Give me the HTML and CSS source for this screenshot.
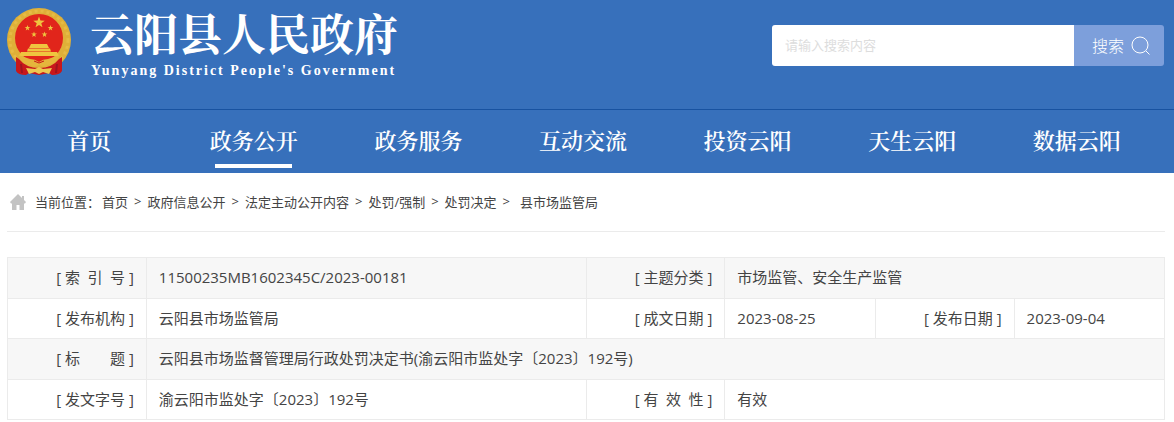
FILE: index.html
```html
<!DOCTYPE html>
<html lang="zh-CN">
<head>
<meta charset="utf-8">
<meta name="viewport" content="width=device-width, initial-scale=1">
<title>云阳县人民政府</title>
<link rel="stylesheet" href="styles.css">
</head>
<body>
<header class="site-header">
  <div class="banner">
    <a class="brand" href="#">
      <svg class="emblem" viewBox="0 0 64 70" aria-hidden="true">
        <defs>
          <path id="star" d="M0-5 1.2-1.6 4.8-1.5 1.9.6 2.9 4 0 2-2.9 4-1.9.6-4.8-1.5-1.2-1.6Z"/>
        </defs>
        <circle cx="32" cy="32" r="32" fill="#dfb038"/>
        <circle cx="32" cy="32" r="29" fill="none" stroke="#e6bb45" stroke-width="3" stroke-dasharray="3 3"/>
        <circle cx="32" cy="30" r="24" fill="#e1251b"/>
        <g fill="#efc53f">
          <use href="#star" transform="translate(32 14.500) scale(1.200)"/>
          <use href="#star" transform="translate(20.500 20) scale(.6)"/>
          <use href="#star" transform="translate(43.500 20) scale(.6)"/>
          <use href="#star" transform="translate(27 26.500) scale(.6)"/>
          <use href="#star" transform="translate(37.500 26.500) scale(.6)"/>
          <path d="M24 36h16l2 4H22Z"/>
          <path d="M21 40.500h22l1 3H20Z"/>
          <path d="M14 44h36l2 4H12Z"/>
        </g>
        <path d="M9 49 12 51Q19 60 32 60T52 51L55 49V63Q53 67 45 67L42 65 32 67 22 65 19 67Q11 67 9 63Z" fill="#c8171b"/>
        <path d="M11 47Q17 49 23 51Q28 51 32 54Q36 51 41 51Q47 49 53 47Q51 52 47 55L41 57 37 59 32 57 27 59 23 57 17 55Q13 52 11 47Z" fill="#e5b63c"/>
        <path d="M27 53 32 55 37 53" fill="none" stroke="#c8171b" stroke-width="1"/>
        <path d="M19 60 28 61 32 59 36 61 45 60 42 66 36 64 32 66 28 64 22 66Z" fill="#edc850"/>
        <path d="M14 56 15 65M50 56 49 65" stroke="#9f141f" stroke-width="2"/>
      </svg>
      <span class="brand-text">
        <span class="brand-name">云阳县人民政府</span>
        <span class="brand-sub" lang="en">Yunyang District People's Government</span>
      </span>
    </a>
    <form class="search" role="search">
      <input class="search-input" type="search" aria-label="搜索" placeholder="请输入搜索内容">
      <button class="search-button" type="submit">搜索
        <svg class="search-icon" viewBox="0 0 20 20" aria-hidden="true"><circle cx="9" cy="9" r="8"/><path d="M15 15 18.500 18.500"/></svg>
      </button>
    </form>
  </div>
  <nav class="main-nav">
    <a class="nav-link" href="#">首页</a>
    <a class="nav-link nav-active" href="#">政务公开</a>
    <a class="nav-link" href="#">政务服务</a>
    <a class="nav-link" href="#">互动交流</a>
    <a class="nav-link" href="#">投资云阳</a>
    <a class="nav-link" href="#">天生云阳</a>
    <a class="nav-link" href="#">数据云阳</a>
  </nav>
</header>
<main class="content">
  <nav class="crumbs" aria-label="当前位置">
    <svg class="home-icon" viewBox="0 0 16 16" aria-hidden="true"><path d="M8 0 12 4V2h2v4l2 2-1 1.500h-1V16H9.500v-5h-3v5H2V9.500H1L0 8Z"/></svg>
    <span class="crumbs-label">当前位置：</span><a href="#">首页</a><span class="sep">&gt;</span><a href="#">政府信息公开</a><span class="sep">&gt;</span><a href="#">法定主动公开内容</a><span class="sep">&gt;</span><a href="#">处罚/强制</a><span class="sep">&gt;</span><a href="#">处罚决定</a><span class="sep">&gt;</span><a class="current" href="#">县市场监管局</a>
  </nav>
  <table class="info">
    <colgroup><col class="c-label"><col class="c-wide"><col class="c-label"><col class="c-value"><col class="c-label"><col class="c-value"></colgroup>
    <tbody>
      <tr><th scope="row">[ <span class="label">索引号</span> ]</th><td>11500235MB1602345C/2023-00181</td><th scope="row">[ <span class="label">主题分类</span> ]</th><td colspan="3">市场监管、安全生产监管</td></tr>
      <tr><th scope="row">[ <span class="label">发布机构</span> ]</th><td>云阳县市场监管局</td><th scope="row">[ <span class="label">成文日期</span> ]</th><td>2023-08-25</td><th scope="row">[ <span class="label">发布日期</span> ]</th><td>2023-09-04</td></tr>
      <tr><th scope="row">[ <span class="label">标题</span> ]</th><td colspan="5">云阳县市场监督管理局行政处罚决定书(渝云阳市监处字〔2023〕192号)</td></tr>
      <tr><th scope="row">[ <span class="label">发文字号</span> ]</th><td>渝云阳市监处字〔2023〕192号</td><th scope="row">[ <span class="label">有效性</span> ]</th><td colspan="3">有效</td></tr>
    </tbody>
  </table>
</main>
</body>
</html>
```
FILE: styles.css
```css
* { box-sizing: border-box; }

body {
  margin: 0;
  background: #fff;
  color: #444;
  font-family: "Open Sans", "Noto Sans CJK SC", sans-serif;
  font-size: 15px;
}

a { color: inherit; text-decoration: none; }

.site-header { background: #3770bb; color: #fff; }

.banner {
  display: flex;
  justify-content: space-between;
  align-items: flex-start;
  min-height: 109px;
  padding: 8px 10px 0 7px;
}

.brand { display: flex; gap: 19px; }
.emblem { width: 64px; height: 70px; }
.brand-text { display: flex; flex-direction: column; gap: 5px; }
.brand-name {
  font: 700 44px/48px "Noto Serif CJK SC", "Noto Sans CJK SC", serif;
}
.brand-sub {
  padding-left: 1px;
  font: 700 14px/20px "Liberation Serif", serif;
  letter-spacing: 2px;
}

.search {
  display: flex;
  width: 392px;
  height: 41px;
  margin-top: 17px;
  border-radius: 3px;
  overflow: hidden;
}
.search-input {
  flex: 1;
  min-width: 0;
  padding: 0 13px 2px;
  border: 0;
  background: #fff;
  font: 13px "Open Sans", "Noto Sans CJK SC", sans-serif;
}
.search-input::placeholder { color: #ddd; opacity: 1; }
.search-button {
  display: flex;
  align-items: center;
  justify-content: center;
  gap: 7px;
  width: 90px;
  padding: 0 0 2px 5px;
  border: 0;
  background: #7d9fdb;
  color: #fff;
  font: 300 16px "Open Sans", "Noto Sans CJK SC", sans-serif;
}
.search-icon {
  width: 20px;
  height: 20px;
  margin-top: 2px;
  fill: none;
  stroke: #fff;
}

.main-nav {
  display: grid;
  grid-template-columns: repeat(7, 1fr);
  padding: 0 15px 0 7px;
  border-top: 1px solid #1852a0;
}
.nav-link {
  display: flex;
  flex-direction: column;
  align-items: center;
  height: 63px;
  padding-top: 14px;
  font: 600 22px/32px "Noto Serif CJK SC", "Noto Sans CJK SC", serif;
}
.nav-active::after {
  content: "";
  width: 77px;
  height: 4px;
  margin-top: 8px;
  background: #fff;
}

.content { padding: 0 9px 0 7px; }

.crumbs {
  display: flex;
  align-items: center;
  height: 59px;
  margin-bottom: 25px;
  padding: 0 0 2px 3px;
  border-bottom: 1px solid #ebebeb;
  font-size: 13px;
}
.home-icon {
  width: 16px;
  height: 16px;
  margin: 2px 9px 0 0;
  fill: #c3c3c3;
}
.crumbs-label { margin-right: 2px; }
.sep { margin: 0 6px; }
.current { margin-left: 4px; }

.info {
  width: 100%;
  min-height: 163px;
  border-collapse: collapse;
  table-layout: fixed;
}
.c-label { width: 12%; }
.c-wide { width: 38%; }
.c-value { width: 13%; }
.info th, .info td {
  padding: 9px 12px 10px;
  border: 1px solid #ebebeb;
  font-weight: 400;
  line-height: 20px;
  text-align: left;
}
.info th { text-align: right; }
.info tr:nth-child(odd) { background: #f7f7f7; }
.label {
  display: inline-block;
  width: 60px;
  text-align: justify;
  text-align-last: justify;
}
```
